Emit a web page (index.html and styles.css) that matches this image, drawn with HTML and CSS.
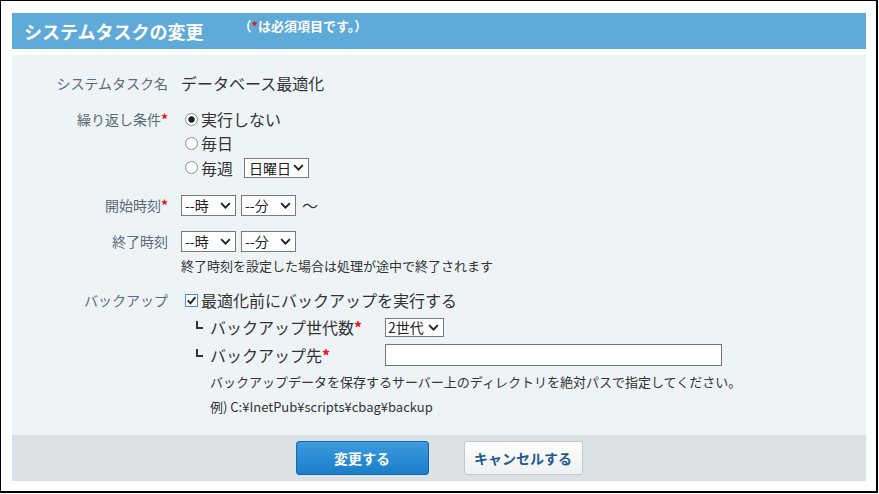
FILE: index.html
```html
<!DOCTYPE html>
<html lang="ja">
<head>
<meta charset="utf-8">
<title>システムタスクの変更</title>
<link rel="stylesheet" href="styles.css">
</head>
<body>
<div class="frame">
  <div class="header">
    <h1 class="title">システムタスクの変更</h1>
    <span class="req-note">（<span class="req">*</span>は必須項目です。）</span>
  </div>
  <div class="panel">
    <div class="row">
      <div class="label">システムタスク名</div>
      <div class="value">データベース最適化</div>
    </div>
    <div class="row">
      <div class="label">繰り返し条件<span class="req">*</span></div>
      <div class="value">
        <div class="opt"><span class="radio checked"></span>実行しない</div>
        <div class="opt"><span class="radio"></span>毎日</div>
        <div class="opt"><span class="radio"></span>毎週<span class="sel sel-day">日曜日<svg class="chev" viewBox="0 0 12 8" width="11" height="7"><path d="M1 1.2 L6 6.4 L11 1.2" fill="none" stroke="#222" stroke-width="2.2"/></svg></span></div>
      </div>
    </div>
    <div class="row row-start">
      <div class="label">開始時刻<span class="req">*</span></div>
      <div class="value">
        <div class="times">
          <span class="sel sel-time">--時<svg class="chev" viewBox="0 0 12 8" width="11" height="7"><path d="M1 1.2 L6 6.4 L11 1.2" fill="none" stroke="#222" stroke-width="2.2"/></svg></span>
          <span class="sel sel-time">--分<svg class="chev" viewBox="0 0 12 8" width="11" height="7"><path d="M1 1.2 L6 6.4 L11 1.2" fill="none" stroke="#222" stroke-width="2.2"/></svg></span>
          <span class="tilde">〜</span>
        </div>
      </div>
    </div>
    <div class="row">
      <div class="label">終了時刻</div>
      <div class="value">
        <div class="times">
          <span class="sel sel-time">--時<svg class="chev" viewBox="0 0 12 8" width="11" height="7"><path d="M1 1.2 L6 6.4 L11 1.2" fill="none" stroke="#222" stroke-width="2.2"/></svg></span>
          <span class="sel sel-time">--分<svg class="chev" viewBox="0 0 12 8" width="11" height="7"><path d="M1 1.2 L6 6.4 L11 1.2" fill="none" stroke="#222" stroke-width="2.2"/></svg></span>
        </div>
        <div class="note">終了時刻を設定した場合は処理が途中で終了されます</div>
      </div>
    </div>
    <div class="row">
      <div class="label label-backup">バックアップ</div>
      <div class="value">
        <div class="opt opt-backup"><span class="check"><svg viewBox="0 0 11 11" width="11" height="11"><path d="M1.8 5.4 L4.4 8.3 L9.4 2.2" fill="none" stroke="#222" stroke-width="2"/></svg></span>最適化前にバックアップを実行する</div>
        <div class="sub">
          <span class="mark"></span>
          <span class="sublabel">バックアップ世代数<span class="req">*</span></span>
          <span class="sel sel-gen">2世代<svg class="chev" viewBox="0 0 12 8" width="11" height="7"><path d="M1 1.2 L6 6.4 L11 1.2" fill="none" stroke="#222" stroke-width="2.2"/></svg></span>
        </div>
        <div class="sub">
          <span class="mark"></span>
          <span class="sublabel">バックアップ先<span class="req">*</span></span>
          <input class="path-input" type="text">
        </div>
        <div class="desc">バックアップデータを保存するサーバー上のディレクトリを絶対パスで指定してください。</div>
        <div class="desc">例) C:¥InetPub¥scripts¥cbag¥backup</div>
      </div>
    </div>
  </div>
  <div class="footer">
    <button class="btn btn-primary" type="button">変更する</button>
    <button class="btn btn-secondary" type="button">キャンセルする</button>
  </div>
</div>
</body>
</html>
```
FILE: styles.css
```css
html, body {
  margin: 0;
  background: #fff;
}
body {
  font-family: "Noto Sans CJK JP", "Noto Sans", sans-serif;
  color: #333;
}
.frame {
  box-sizing: border-box;
  width: 878px;
  height: 493px;
  border-style: solid;
  border-color: #000;
  border-width: 1px 2px 2px 1px;
  padding: 12px 10px 0 11px;
}
.header {
  height: 36px;
  background: #5eaad9;
  display: flex;
  align-items: flex-start;
  padding-left: 12px;
}
.title {
  margin: 0;
  font-size: 18px;
  font-weight: bold;
  color: #fff;
  line-height: 36px;
}
.req-note {
  font-size: 13px;
  font-weight: bold;
  color: #fff;
  margin-left: 35px;
  margin-top: 4px;
  line-height: 17px;
}
.req {
  color: #e8141b;
  font-weight: bold;
}
.panel {
  box-sizing: border-box;
  height: 380px;
  margin-top: 6px;
  background: #eef3f6;
  padding: 16px 0 0;
}
.row {
  display: grid;
  grid-template-columns: 156px 1fr;
  column-gap: 13px;
  align-items: start;
}
.row + .row {
  margin-top: 12px;
}
.row-start {
  margin-top: 13px !important;
}
.label {
  text-align: right;
  font-size: 14px;
  line-height: 24px;
  color: #5b6b7b;
}
.label-backup {
  line-height: 26px;
}
.value {
  font-size: 16px;
  line-height: 24px;
  color: #333;
}
.opt {
  display: flex;
  align-items: center;
  height: 24px;
}
.opt + .opt {
  height: 24.5px;
}
.opt-backup {
  height: 26px !important;
}
.radio {
  box-sizing: border-box;
  width: 13px;
  height: 13px;
  border: 1px solid #8c8c8c;
  border-radius: 50%;
  background: #fff;
  margin: 0 3px 0 4px;
  flex: none;
}
.radio.checked {
  background: radial-gradient(circle, #222 0 2.8px, #fff 3.6px);
}
.check {
  box-sizing: border-box;
  width: 13px;
  height: 13px;
  border: 1px solid #3d8fd1;
  background: #fff;
  margin: 0 3px 0 4px;
  display: inline-flex;
  align-items: center;
  justify-content: center;
  flex: none;
}
.sel {
  display: inline-flex;
  align-items: center;
  justify-content: space-between;
  box-sizing: border-box;
  border: 1px solid #7a7a7a;
  background: #fff;
  font-size: 14px;
  line-height: 16px;
  color: #222;
  padding: 0 4px 0 4px;
}
.sel-day {
  width: 65px;
  height: 20px;
  margin-left: 11px;
}
.sel-time {
  width: 55px;
  height: 21px;
  padding-left: 3px;
}
.sel-gen {
  width: 59px;
  height: 19px;
  padding-left: 2px;
}
.times {
  display: flex;
  align-items: center;
  gap: 5px;
  height: 24px;
}
.tilde {
  margin-left: 1px;
  font-size: 16px;
}
.note {
  margin-top: 4px;
  font-size: 13px;
  line-height: 18px;
}
.sub {
  display: flex;
  align-items: center;
  height: 28px;
  padding-left: 15px;
}
.mark {
  box-sizing: border-box;
  width: 7px;
  height: 8px;
  border-left: 2px solid #333;
  border-bottom: 2px solid #333;
  margin-right: 7px;
  margin-bottom: 5px;
  flex: none;
}
.sublabel {
  width: 175px;
  font-size: 16px;
  flex: none;
}
.path-input {
  box-sizing: border-box;
  width: 337px;
  height: 22px;
  border: 1px solid #767676;
  background: #fff;
  margin: 0;
  padding: 0 3px;
}
.desc {
  padding-left: 29px;
  font-size: 13px;
  line-height: 25px;
}
.footer {
  box-sizing: border-box;
  height: 46px;
  background: #dce1e5;
  display: flex;
  justify-content: center;
  align-items: flex-start;
  gap: 35px;
  padding-top: 6px;
}
.btn {
  box-sizing: border-box;
  height: 34px;
  border-radius: 3px;
  font-family: inherit;
  font-size: 14px;
  font-weight: bold;
  padding: 0;
  cursor: pointer;
}
.btn-primary {
  width: 133px;
  background: linear-gradient(#3b9be0, #1a7dc8);
  border: 1px solid #1b6aa5;
  color: #fff;
}
.btn-secondary {
  width: 119px;
  background: linear-gradient(#ffffff, #eef0f1);
  border: 1px solid #c2c8cc;
  color: #1d5a8e;
}
```
